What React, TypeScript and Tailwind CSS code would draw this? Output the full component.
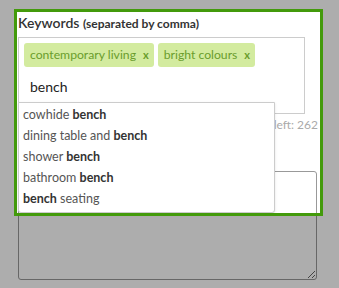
import React from "react";

const suggestions: [string, string][] = [
  ["cowhide ", ""],
  ["dining table and ", ""],
  ["shower ", ""],
  ["bathroom ", ""],
  ["", " seating"],
];

function Tag({ label }: { label: string }) {
  return (
    <span className="flex h-[24px] items-center gap-[7px] rounded-[3px] bg-[#d3eb9f] pl-[6px] pr-[5px] text-[12.2px] text-[#6a9d2c]">
      {label}
      <span className="text-[11px] font-bold">x</span>
    </span>
  );
}

export default function App() {
  return (
    <div
      className="relative h-[288px] w-[339px] overflow-hidden bg-white"
      style={{ fontFamily: "Lato, 'Open Sans', sans-serif" }}
    >
      <div className="flex flex-col px-[18px] pt-[12px]">
        <label className="text-[14px] font-semibold text-[#333]">
          Keywords{" "}
          <span className="text-[12px] font-bold">(separated by comma)</span>
        </label>

        <div className="mt-[4px] flex h-[77px] w-[287px] flex-col border border-[#ccc] px-[5px] pt-[5px]">
          <div className="flex gap-[4px]">
            <Tag label="contemporary living" />
            <Tag label="bright colours" />
          </div>
          <div className="ml-[6px] mt-[9px] text-[14px] text-[#222]">bench</div>
        </div>

        <p className="mt-[2px] self-end pr-[3px] text-[12px] text-[#aaa]">
          Characters left: 262
        </p>

        <textarea className="mt-[37px] h-[109px] w-[299px] resize rounded-[3px] border border-[#999] bg-white" />
      </div>

      {/* autocomplete menu */}
      <ul className="absolute left-[18px] top-[102px] w-[257px] rounded-b-[3px] border border-[#ccc] bg-white pb-[3px] pt-[1px] text-[12.5px] text-[#555] shadow-sm">
        {suggestions.map(([pre, post], i) => (
          <li key={i} className="h-[21px] px-[4px] leading-[21px]">
            {pre}
            <b className="text-[#333]">bench</b>
            {post}
          </li>
        ))}
      </ul>

      {/* tutorial spotlight */}
      <div className="absolute left-[14px] top-[9px] h-[207px] w-[309px] border-[3px] border-[#439a0b] shadow-[0_0_0_999px_rgba(0,0,0,0.32)]" />
    </div>
  );
}
